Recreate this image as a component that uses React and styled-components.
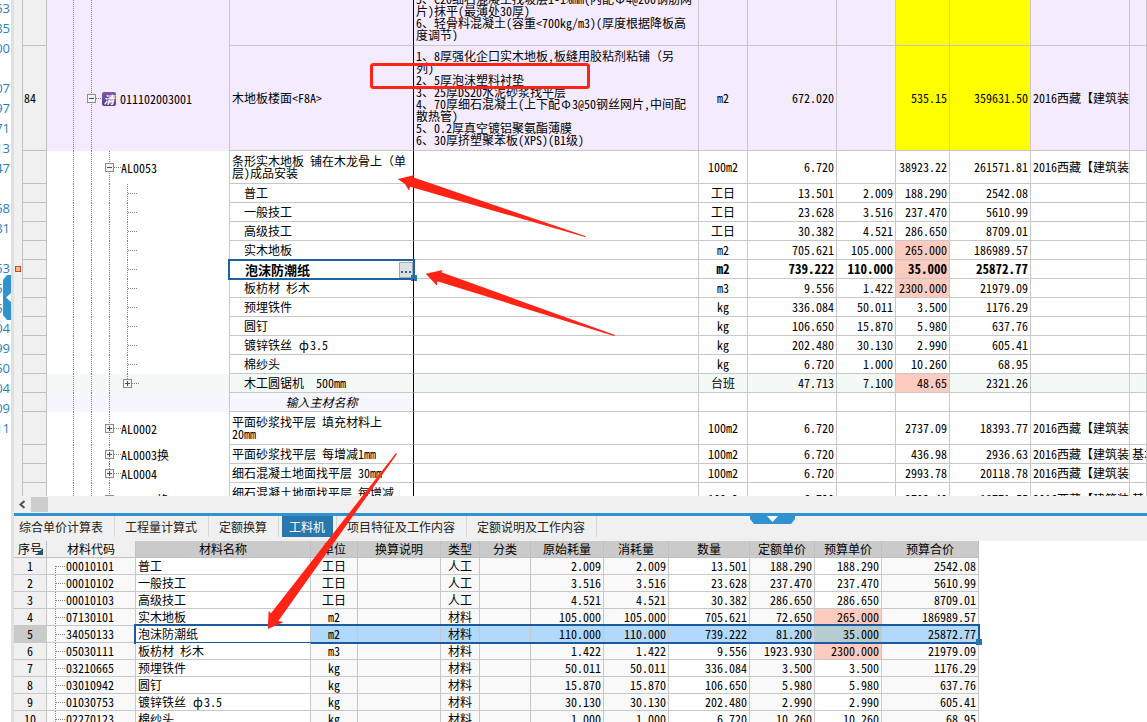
import styled, { createGlobalStyle, css } from "styled-components";

const GlobalStyle = createGlobalStyle`
  * {
    box-sizing: border-box;
  }
  body {
    margin: 0;
    background: #fff;
    color: #000;
    font-family: "Noto Sans CJK SC", sans-serif;
    font-size: 12px;
    line-height: 12px;
    font-feature-settings: "hwid" 1;
    overflow: hidden;
  }
  button {
    font: inherit;
    padding: 0;
    border: 0;
  }
`;

const Page = styled.div`
  position: relative;
  display: flex;
  height: 100vh;
  overflow: hidden;
`;

const Summary = styled.aside`
  position: relative;
  flex: 0 0 14px;
  overflow: hidden;
  border-right: 3px solid #e0e0e0;
`;

const SummaryList = styled.ul`
  display: flex;
  flex-direction: column;
  align-items: flex-end;
  width: 10px;
  margin: -2px 0 0;
  padding: 0;
  list-style: none;
  font-family: "Open Sans", sans-serif;
  font-size: 13px;
  line-height: 20px;
  color: #2a7fb8;

  li {
    flex: 0 0 20px;
  }
`;

const SideHandle = styled.button`
  position: absolute;
  left: 3px;
  top: 275px;
  z-index: 2;
  width: 10px;
  height: 45px;
  background: none;

  svg {
    display: block;
  }
`;

const Main = styled.main`
  flex: 1;
  min-width: 0;
  display: flex;
  flex-direction: column;
`;

const UpperPane = styled.section`
  flex: 1;
  min-height: 0;
  display: flex;
  overflow: hidden;
`;

const Gutter = styled.div`
  position: relative;
  flex: 0 0 8px;
  background: #f0f0f0;
`;

const RowMark = styled.span`
  position: absolute;
  left: 1px;
  top: 266px;
  width: 6px;
  height: 6px;
  border: 1px solid #d8431a;
  background: #fbb79e;
`;

const Grid = styled.table`
  table-layout: fixed;
  border-collapse: separate;
  border-spacing: 0;
`;

const BudgetGrid = styled(Grid)`
  width: 100%;
  border-left: 1px solid #c0c0c0;
`;

const BudgetRow = styled.tr`
  height: ${(p) => p.$h}px;
  font-weight: ${(p) => (p.$bold ? 700 : 400)};
  font-size: ${(p) => (p.$bold ? 13 : 12)}px;
  background: ${(p) => p.$bg || "#fff"};
`;

const cell = css`
  padding: 0 2px;
  border-right: 1px solid #c8c8c8;
  border-bottom: 1px solid #c8c8c8;
  white-space: nowrap;
  overflow: hidden;
  text-align: ${(p) => p.$align || "left"};
`;

const Cell = styled.td`
  ${cell}
  background: ${(p) => p.$bg || "transparent"};
`;

const NumCell = styled(Cell)`
  padding: 0 1px;
  background: #f0f0f0;
  border-color: #c0c0c0;
`;

const NameCell = styled(Cell)`
  position: relative;
  overflow: visible;
  padding-left: ${(p) => (p.$indent ? 14 : 2)}px;
  border-right-color: #000;
  white-space: pre;
`;

const PreCell = styled(Cell)`
  white-space: pre;
`;

const Clip = styled.div`
  display: flex;
  align-items: flex-end;
  height: 41px;
  margin-bottom: 4px;
  overflow: hidden;
`;

// a symbol that keeps the full em width among half-width letters
const Wide = styled.span`
  display: inline-block;
  width: 12px;
  text-align: center;
  font-feature-settings: normal;
`;

const MainMaterial = styled.div`
  text-align: center;
  font-style: italic;
`;

// vertical dotted guide at x, used as one background layer
const guide = (x, from = "0", h = "100%") =>
  `repeating-linear-gradient(#808080 0 1px, transparent 1px 2px) ${x}px ${from} / 1px ${h} no-repeat`;

const TreeCell = styled.td`
  padding: 0 0 0 ${(p) => p.$pad}px;
  border-right: 1px solid #c8c8c8;
  background: ${(p) => p.$guides.join(", ")};
  white-space: nowrap;
`;

const TreeLine = styled.div`
  display: flex;
  align-items: center;
`;

const Dots = styled.span`
  flex: 0 0 ${(p) => p.$w}px;
  height: 1px;
  background: repeating-linear-gradient(90deg, #808080 0 1px, transparent 1px 2px);
`;

const Toggle = styled.button`
  flex: 0 0 9px;
  height: 9px;
  background: none;

  svg {
    display: block;
  }
`;

const ListBadge = styled.span`
  display: flex;
  align-items: center;
  justify-content: center;
  width: 14px;
  height: 14px;
  margin-right: 4px;
  border-radius: 2px;
  background: linear-gradient(#8257a8, #5b3d86);
  color: #fff;
  font-size: 11px;
  font-weight: 700;
  font-style: italic;
`;

const Editor = styled.div`
  position: absolute;
  inset: -1px -2px -2px -2px;
  display: flex;
  align-items: center;
  justify-content: space-between;
  padding: 0 0 0 15px;
  border: 2px solid #1c62a5;
`;

const MoreButton = styled.button`
  width: 14px;
  height: 16px;
  border: 1px solid #a8a8a8;
  background: #e0e0e0;

  svg {
    display: block;
    margin: 4px auto 0;
  }
`;

const FillHandle = styled.span`
  position: absolute;
  right: -4px;
  bottom: -3px;
  width: 6px;
  height: 6px;
  background: #2474ad;
`;

const LowerPane = styled.section`
  position: relative;
  flex: 0 0 226px;
  overflow: hidden;
`;

const ScrollBar = styled.div`
  display: flex;
  align-items: center;
  height: 17px;
  padding: 0 4px;
  background: #f0f0f0;
`;

const ScrollArrow = styled.button`
  width: 13px;
  height: 15px;
  background: none;

  svg {
    display: block;
  }
`;

const ScrollThumb = styled.div`
  width: 17px;
  height: 15px;
  background: #cdcdcd;
`;

const TabBar = styled.nav`
  display: flex;
  align-items: flex-start;
  height: 28px;
  border-top: 3px solid #3092cf;
  background: #f0f0f0;
`;

const TabSlot = styled.div`
  padding: 0 3px;
  border-right: 1px solid #d8d8d8;

  &:first-child {
    padding-left: 0;
  }
  &:first-child button {
    padding-left: 5px;
  }
`;

const Tab = styled.button`
  display: block;
  height: 21px;
  padding: 0 8px 0 7px;
  background: ${(p) => (p.$active ? "#2878ae" : "transparent")};
  color: ${(p) => (p.$active ? "#fff" : "#222")};
`;

const PullTab = styled.button`
  position: absolute;
  left: 736px;
  top: 20px;
  width: 45px;
  height: 8px;
  background: none;

  svg {
    display: block;
  }
`;

const MaterialGrid = styled(Grid)`
  width: 965px;
`;

const MaterialRow = styled.tr`
  height: 17px;
`;

const HeadCell = styled.th`
  ${cell}
  position: relative;
  font-weight: 400;
  background: ${(p) => (p.$light ? "#f0f0f0" : "#cacaca")};
  border-color: #c0c0c0;
`;

const Corner = styled.svg`
  position: absolute;
  right: 3px;
  bottom: 2px;
`;

const CodeCell = styled(Cell)`
  padding-left: 9px;
  background: ${(p) => `${guide(8, p.$first ? "8px" : "0")}, #f9f9f9`};
`;

const AnchorCell = styled(Cell)`
  position: relative;
  overflow: visible;
`;

// runs from the name column to the right end of the table
const Selection = styled.div`
  position: absolute;
  top: -2px;
  left: -2px;
  width: 846px;
  height: 20px;
  border: 2px solid #1c5aa0;
  pointer-events: none;
`;

const Markup = styled.svg`
  position: absolute;
  left: 0;
  top: 0;
  z-index: 3;
  pointer-events: none;
`;

const summary = [
  "53", "85", "00", "", "07", "97", "71", "13", "47", "", "58", "81", "", "53",
  "55", "55", "04", "99", "50", "04", "09", "11",
];

const PINK = "#fdcbbf";
const LILAC = "#f4ebfe";
const BOOK = "2016西藏【建筑装";

const budget = [
  {
    h: 46, level: 2, bg: LILAC, yellow: true, clip: true,
    feature: "5、C20细石混凝土找坡层1-1%mm(内配Φ4@200钢筋网\n片)抹平(最薄处30厚)\n6、轻骨料混凝土(容重<700kg/m3)(厚度根据降板高\n度调节)",
  },
  {
    h: 105, level: 2, bg: LILAC, yellow: true, no: "84", kind: "list", code: "011102003001",
    name: "木地板楼面<F8A>",
    feature: "1、8厚强化企口实木地板,板缝用胶粘剂粘铺（另\n列)\n2、5厚泡沫塑料衬垫\n3、25厚DS20水泥砂浆找平层\n4、70厚细石混凝土(上下配Φ3@50钢丝网片,中间配\n散热管)\n5、0.2厚真空镀铝聚氨酯薄膜\n6、30厚挤塑聚苯板(XPS)(B1级)",
    unit: "m2", qty: "672.020", price: "535.15", total: "359631.50", book: BOOK,
  },
  { h: 33, level: 3, kind: "open", code: "AL0053", name: "条形实木地板 铺在木龙骨上（单\n层)成品安装", unit: "100m2", qty: "6.720", price: "38923.22", total: "261571.81", book: BOOK },
  { h: 19, level: 4, name: "普工", unit: "工日", qty: "13.501", use: "2.009", price: "188.290", total: "2542.08" },
  { h: 19, level: 4, name: "一般技工", unit: "工日", qty: "23.628", use: "3.516", price: "237.470", total: "5610.99" },
  { h: 19, level: 4, name: "高级技工", unit: "工日", qty: "30.382", use: "4.521", price: "286.650", total: "8709.01" },
  { h: 19, level: 4, name: "实木地板", unit: "m2", qty: "705.621", use: "105.000", price: "265.000", total: "186989.57", pink: true },
  { h: 19, level: 4, name: "泡沫防潮纸", unit: "m2", qty: "739.222", use: "110.000", price: "35.000", total: "25872.77", pink: true, editing: true },
  { h: 19, level: 4, name: "板枋材 杉木", unit: "m3", qty: "9.556", use: "1.422", price: "2300.000", total: "21979.09", pink: true },
  { h: 19, level: 4, name: "预埋铁件", unit: "kg", qty: "336.084", use: "50.011", price: "3.500", total: "1176.29" },
  { h: 19, level: 4, name: "圆钉", unit: "kg", qty: "106.650", use: "15.870", price: "5.980", total: "637.76" },
  { h: 19, level: 4, name: "镀锌铁丝 ф3.5", unit: "kg", qty: "202.480", use: "30.130", price: "2.990", total: "605.41" },
  { h: 19, level: 4, name: "棉纱头", unit: "kg", qty: "6.720", use: "1.000", price: "10.260", total: "68.95" },
  { h: 19, level: 4, kind: "closed", bg: "#f3faf6", name: "木工圆锯机  500mm", unit: "台班", qty: "47.713", use: "7.100", price: "48.65", total: "2321.26", pink: true },
  { h: 19, level: 3, nameBg: "#f6f6fe", placeholder: "输入主材名称" },
  { h: 33, level: 3, kind: "closed", code: "AL0002", name: "平面砂浆找平层 填充材料上\n20mm", unit: "100m2", qty: "6.720", price: "2737.09", total: "18393.77", book: BOOK },
  { h: 19, level: 3, kind: "closed", code: "AL0003换", name: "平面砂浆找平层 每增减1mm", unit: "100m2", qty: "6.720", price: "436.98", total: "2936.63", book: BOOK, note: "基本" },
  { h: 19, level: 3, kind: "closed", code: "AL0004", name: "细石混凝土地面找平层 30mm", unit: "100m2", qty: "6.720", price: "2993.78", total: "20118.78", book: BOOK },
  { h: 33, level: 3, kind: "closed", code: "AL0005换", name: "细石混凝土地面找平层 每增减\n5mm", unit: "100m2", qty: "6.720", price: "2793.40", total: "18771.55", book: BOOK, note: "基本" },
];

const columns = [
  { label: "序号", w: 33, light: true },
  { label: "材料代码", w: 89, light: true },
  { label: "材料名称", w: 175 },
  { label: "单位", w: 47 },
  { label: "换算说明", w: 83 },
  { label: "类型", w: 39 },
  { label: "分类", w: 51 },
  { label: "原始耗量", w: 73 },
  { label: "消耗量", w: 65 },
  { label: "数量", w: 81 },
  { label: "定额单价", w: 65 },
  { label: "预算单价", w: 67 },
  { label: "预算合价", w: 97 },
];

// code, name, unit, type, consumption, quantity, quota price, budget price, total
const materials = [
  ["00010101", "普工", "工日", "人工", "2.009", "13.501", "188.290", "188.290", "2542.08"],
  ["00010102", "一般技工", "工日", "人工", "3.516", "23.628", "237.470", "237.470", "5610.99"],
  ["00010103", "高级技工", "工日", "人工", "4.521", "30.382", "286.650", "286.650", "8709.01"],
  ["07130101", "实木地板", "m2", "材料", "105.000", "705.621", "72.650", "265.000", "186989.57"],
  ["34050133", "泡沫防潮纸", "m2", "材料", "110.000", "739.222", "81.200", "35.000", "25872.77"],
  ["05030111", "板枋材 杉木", "m3", "材料", "1.422", "9.556", "1923.930", "2300.000", "21979.09"],
  ["03210665", "预埋铁件", "kg", "材料", "50.011", "336.084", "3.500", "3.500", "1176.29"],
  ["03010942", "圆钉", "kg", "材料", "15.870", "106.650", "5.980", "5.980", "637.76"],
  ["01030753", "镀锌铁丝 ф3.5", "kg", "材料", "30.130", "202.480", "2.990", "2.990", "605.41"],
  ["02270123", "棉纱头", "kg", "材料", "1.000", "6.720", "10.260", "10.260", "68.95"],
];

const tabs = ["综合单价计算表", "工程量计算式", "定额换算", "工料机", "项目特征及工作内容", "定额说明及工作内容"];

function Text({ children = "" }) {
  return (
    <span>
      {children.split(/([（Φф])/).map((part, i) => (i % 2 ? <Wide key={i}>{part}</Wide> : part))}
    </span>
  );
}

function TreeToggle({ open }) {
  return (
    <Toggle aria-label={open ? "折叠" : "展开"}>
      <svg width="9" height="9" shapeRendering="crispEdges">
        <rect x="0.5" y="0.5" width="8" height="8" fill="#f4f4f4" stroke="#8c8c8c" />
        <path d={open ? "M2 4.5h5" : "M2 4.5h5M4.5 2v5"} stroke="#2c4f9e" />
      </svg>
    </Toggle>
  );
}

function Tree({ row }) {
  const guides = [guide(26), guide(44)];
  if (row.level > 2) guides.push(guide(62));
  if (row.level > 3) guides.push(guide(80, "0", row.kind ? "50%" : "100%"));
  guides.push(row.nameBg || row.bg || "#fff");

  const leaf = row.level === 4 && !row.kind;
  const pad = leaf ? 81 : 26 + (row.level - 1) * 18 - 4;

  return (
    <TreeCell $guides={guides} $pad={pad}>
      <TreeLine>
        {leaf && <Dots $w={10} />}
        {row.kind && <TreeToggle open={row.kind !== "closed"} />}
        {row.kind && <Dots $w={row.kind === "list" ? 6 : 7} />}
        {row.kind === "list" && <ListBadge>清</ListBadge>}
        {row.code}
      </TreeLine>
    </TreeCell>
  );
}

function BudgetLine({ row }) {
  const amountBg = row.yellow ? "#ffff00" : undefined;
  return (
    <BudgetRow $h={row.h} $bg={row.bg} $bold={row.editing}>
      <NumCell>{row.no}</NumCell>
      <Tree row={row} />
      <NameCell $indent={row.level === 4} $bg={row.nameBg}>
        {row.placeholder && <MainMaterial>{row.placeholder}</MainMaterial>}
        {row.editing ? (
          <Editor>
            {row.name}
            <MoreButton aria-label="选择材料">
              <svg width="12" height="6" fill="#1a6cc4" shapeRendering="crispEdges">
                <path d="M1 2h2v2H1zM5 2h2v2H5zM9 2h2v2H9z" />
              </svg>
            </MoreButton>
            <FillHandle />
          </Editor>
        ) : (
          <Text>{row.name}</Text>
        )}
      </NameCell>
      <PreCell>
        {row.clip ? (
          <Clip>
            <Text>{row.feature}</Text>
          </Clip>
        ) : (
          <Text>{row.feature}</Text>
        )}
      </PreCell>
      <Cell $align="center">{row.unit}</Cell>
      <Cell $align="right">{row.qty}</Cell>
      <Cell $align="right">{row.use}</Cell>
      <Cell $align="right" $bg={row.pink ? PINK : amountBg}>{row.price}</Cell>
      <Cell $align="right" $bg={amountBg}>{row.total}</Cell>
      <Cell>{row.book}</Cell>
      <Cell>{row.note}</Cell>
    </BudgetRow>
  );
}

function MaterialLine({ item, index }) {
  const [code, name, unit, type, use, qty, quota, price, total] = item;
  const selected = code === "34050133";
  const shade = selected ? "#b1d9fb" : "#f9f9f9";
  const plain = selected ? "#b3d8ff" : "#fff";
  const priceBg = selected ? "#b5ccd1" : quota !== price ? PINK : "#fff";

  return (
    <MaterialRow>
      <Cell $align="center" $bg={selected ? "#cacaca" : "#f0f0f0"}>{index + 1}</Cell>
      <CodeCell $first={index === 0}>
        <TreeLine>
          <Dots $w={10} />
          {code}
        </TreeLine>
      </CodeCell>
      <AnchorCell $bg="#fff">
        <Text>{name}</Text>
        {selected && (
          <Selection>
            <FillHandle />
          </Selection>
        )}
      </AnchorCell>
      <Cell $align="center" $bg={shade}>{unit}</Cell>
      <Cell $bg={shade} />
      <Cell $align="center" $bg={shade}>{type}</Cell>
      <Cell $bg={shade} />
      <Cell $align="right" $bg={shade}>{use}</Cell>
      <Cell $align="right" $bg={shade}>{use}</Cell>
      <Cell $align="right" $bg={plain}>{qty}</Cell>
      <Cell $align="right" $bg={shade}>{quota}</Cell>
      <Cell $align="right" $bg={priceBg}>{price}</Cell>
      <Cell $align="right" $bg={shade}>{total}</Cell>
    </MaterialRow>
  );
}

export default function App() {
  return (
    <Page>
      <GlobalStyle />
      <Summary>
        <SummaryList>
          {summary.map((s, i) => (
            <li key={i}>{s}</li>
          ))}
        </SummaryList>
        <SideHandle aria-label="收起">
          <svg width="10" height="45">
            <path d="M10 0H4L0 5v35l4 5h6z" fill="#3092cf" />
            <path d="M9 17v11l-6-5.500z" fill="#fff" />
          </svg>
        </SideHandle>
      </Summary>

      <Main>
        <UpperPane>
          <Gutter>
            <RowMark />
          </Gutter>
          <BudgetGrid>
            <colgroup>
              {[24, 183, 184, 285, 49, 89, 59, 54, 81, 99].map((w, i) => (
                <col key={i} width={w} />
              ))}
              <col />
            </colgroup>
            <tbody>
              {budget.map((row, i) => (
                <BudgetLine key={i} row={row} />
              ))}
            </tbody>
          </BudgetGrid>
        </UpperPane>

        <LowerPane>
          <ScrollBar>
            <ScrollArrow aria-label="向左滚动">
              <svg width="13" height="15" fill="none" stroke="#505050" strokeWidth="2">
                <path d="M6.500 4L2.500 7.500l4 3.500" />
              </svg>
            </ScrollArrow>
            <ScrollThumb />
          </ScrollBar>
          <TabBar>
            {tabs.map((t) => (
              <TabSlot key={t}>
                <Tab $active={t === "工料机"}>{t}</Tab>
              </TabSlot>
            ))}
          </TabBar>
          <PullTab aria-label="收起面板">
            <svg width="45" height="8">
              <path d="M0 0h45v3l-4 5H4L0 3z" fill="#3092cf" />
              <path d="M17 0h11l-5.500 6z" fill="#fff" />
            </svg>
          </PullTab>
          <MaterialGrid>
            <colgroup>
              {columns.map((c) => (
                <col key={c.label} width={c.w} />
              ))}
            </colgroup>
            <thead>
              <MaterialRow>
                {columns.map((c, i) => (
                  <HeadCell key={c.label} $align="center" $light={c.light}>
                    {c.label}
                    {i === 0 && (
                      <Corner width="7" height="7">
                        <path d="M7 0v7H0z" fill="#1b567f" />
                      </Corner>
                    )}
                  </HeadCell>
                ))}
              </MaterialRow>
            </thead>
            <tbody>
              {materials.map((item, i) => (
                <MaterialLine key={item[0]} item={item} index={i} />
              ))}
            </tbody>
          </MaterialGrid>
        </LowerPane>
      </Main>

      <Markup width="1147" height="722" fill="#ff2415">
        <rect x="371.500" y="64.500" width="217" height="23" rx="2" fill="none" stroke="#ff2415" strokeWidth="3" />
        <path d="M397.700 179L414.700 175 413 177.300 586 236.300 585 237 410 186.700 409 190.700 405 184z" />
        <path d="M425.700 273.700L442.700 270 441.300 272.300 615 335 614 336 437.300 281.300 437 285.700z" />
        <path d="M267.700 629L268.700 611 271 613.300 396 453 397 454 278.300 621 283.700 622z" />
      </Markup>
    </Page>
  );
}
